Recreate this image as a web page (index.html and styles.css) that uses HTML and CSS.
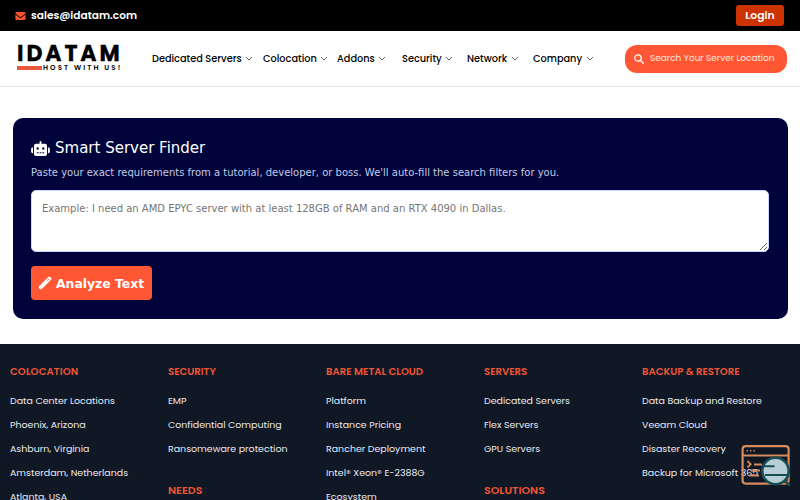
FILE: index.html
```html
<!DOCTYPE html>
<html lang="en">
<head>
  <meta charset="UTF-8">
  <meta name="viewport" content="width=device-width, initial-scale=1.0">
  <title>Smart Server Finder - IDATAM</title>
  <link rel="stylesheet" href="styles.css">
</head>
<body>

  <!-- Top bar -->
  <div class="topbar">
    <a class="mail" href="mailto:sales@idatam.com">
      <svg class="mail-icon" viewBox="0 0 512 400"><path d="M48 0h416a48 48 0 0 1 29 86L275 250a32 32 0 0 1-38 0L19 86A48 48 0 0 1 48 0zM0 120l218 163a64 64 0 0 0 76 0l218-163v216a64 64 0 0 1-64 64H64a64 64 0 0 1-64-64z"/></svg>
      <span>sales@idatam.com</span>
    </a>
    <a class="login" href="#">Login</a>
  </div>

  <!-- Navbar -->
  <header class="navbar">
    <a class="logo" href="#">
      <span class="logo-name">IDATAM</span>
      <span class="logo-tag"><i class="logo-bar"></i><span class="logo-text">HOST WITH US!</span></span>
    </a>
    <nav class="menu">
      <a class="w-dedicated" href="#">Dedicated Servers <svg class="chevron" viewBox="0 0 8 5"><path d="M1 1l3 3 3-3"/></svg></a>
      <a class="w-colocation" href="#">Colocation <svg class="chevron" viewBox="0 0 8 5"><path d="M1 1l3 3 3-3"/></svg></a>
      <a href="#">Addons <svg class="chevron" viewBox="0 0 8 5"><path d="M1 1l3 3 3-3"/></svg></a>
      <a href="#">Security <svg class="chevron" viewBox="0 0 8 5"><path d="M1 1l3 3 3-3"/></svg></a>
      <a class="w-network" href="#">Network <svg class="chevron" viewBox="0 0 8 5"><path d="M1 1l3 3 3-3"/></svg></a>
      <a href="#">Company <svg class="chevron" viewBox="0 0 8 5"><path d="M1 1l3 3 3-3"/></svg></a>
    </nav>
    <a class="search" href="#">
      <svg class="search-icon" viewBox="0 0 10 10"><circle cx="4" cy="4" r="3.2"/><path d="M6.5 6.5L9.3 9.3"/></svg>
      <span>Search Your Server Location</span>
    </a>
  </header>

  <!-- Finder -->
  <main class="finder">
    <h1 class="finder-title">
      <svg class="robot" viewBox="0 0 640 512"><path fill-rule="evenodd" d="M320 0a32 32 0 0 1 32 32v64h120a72 72 0 0 1 72 72v272a72 72 0 0 1-72 72H168a72 72 0 0 1-72-72V168a72 72 0 0 1 72-72h120V32a32 32 0 0 1 32-32zM192 384v32h64v-32zm96 0v32h64v-32zm96 0v32h64v-32zM224 216a40 40 0 1 0 0 80 40 40 0 1 0 0-80zm192 0a40 40 0 1 0 0 80 40 40 0 1 0 0-80zM48 224h16v192H48a48 48 0 0 1-48-48v-96a48 48 0 0 1 48-48zm544 0a48 48 0 0 1 48 48v96a48 48 0 0 1-48 48h-16V224z"/></svg>
      Smart Server Finder
    </h1>
    <p class="finder-text">Paste your exact requirements from a tutorial, developer, or boss. We'll auto-fill the search filters for you.</p>
    <textarea class="finder-input" placeholder="Example: I need an AMD EPYC server with at least 128GB of RAM and an RTX 4090 in Dallas."></textarea>
    <button class="finder-btn">
      <svg class="wand" viewBox="0 0 14 14"><path d="M1 10.3L10.3 1q1-.9 2 0l.8.8q.9 1 0 2L3.8 13q-1 .8-1.9 0l-.9-.9q-.8-.9 0-1.8z"/><path class="wand-tip" d="M9.4 4.7l2.2-2.2"/></svg>
      <span>Analyze Text</span>
    </button>
  </main>

  <!-- Footer -->
  <footer class="footer">
    <div class="col">
      <h4 class="wide">COLOCATION</h4>
      <ul>
        <li>Data Center Locations</li>
        <li>Phoenix, Arizona</li>
        <li>Ashburn, Virginia</li>
        <li>Amsterdam, Netherlands</li>
        <li>Atlanta, USA</li>
      </ul>
    </div>
    <div class="col">
      <h4>SECURITY</h4>
      <ul>
        <li>EMP</li>
        <li>Confidential Computing</li>
        <li>Ransomeware protection</li>
      </ul>
      <h4 class="second">NEEDS</h4>
    </div>
    <div class="col">
      <h4>BARE METAL CLOUD</h4>
      <ul>
        <li>Platform</li>
        <li>Instance Pricing</li>
        <li>Rancher Deployment</li>
        <li>Intel® Xeon® E-2388G</li>
        <li>Ecosystem</li>
      </ul>
    </div>
    <div class="col">
      <h4>SERVERS</h4>
      <ul>
        <li>Dedicated Servers</li>
        <li>Flex Servers</li>
        <li>GPU Servers</li>
      </ul>
      <h4 class="second">SOLUTIONS</h4>
    </div>
    <div class="col">
      <h4>BACKUP &amp; RESTORE</h4>
      <ul>
        <li>Data Backup and Restore</li>
        <li>Veeam Cloud</li>
        <li>Disaster Recovery</li>
        <li>Backup for Microsoft 365</li>
      </ul>
    </div>
  </footer>

  <!-- Floating finder button -->
  <a class="float-btn" href="#">
    <svg viewBox="0 0 50 44">
      <g fill="none" stroke="#d58b5c" stroke-width="2.2">
        <rect x="1.6" y="2.1" width="46" height="37.5" rx="3"/>
        <path d="M2 11.5h45"/>
        <path d="M6.5 17l3.2 3.2-3.2 3.2M13 20.5h8M10 26.5h9M8 31.5h10" stroke-width="1.8"/>
        <path d="M5.5 6.7h1.4M9 6.7h1.4M12.5 6.7h1.4" stroke-width="1.4"/>
      </g>
      <path d="M44 37l4.5 4.5" stroke="#174e55" stroke-width="2.5"/>
      <circle cx="34.5" cy="27" r="13.2" fill="#b9cfd7" stroke="#174e55" stroke-width="2.6"/>
      <path d="M22 22.3h11.5M24 31h22" stroke="#174e55" stroke-width="2.1"/>
    </svg>
  </a>

</body>
</html>
```
FILE: styles.css
```css
* {
  box-sizing: border-box;
}
body {
  margin: 0;
  height: 500px;
  overflow: hidden;
  background: #fff;
  font-family: Poppins, Inter, sans-serif;
  color: #000;
}
a {
  color: inherit;
  text-decoration: none;
}

/* Top bar */
.topbar {
  height: 31px;
  padding: 0 16px 0 15px;
  background: #000;
  color: #fff;
  display: flex;
  justify-content: space-between;
  align-items: center;
}
.mail {
  display: flex;
  align-items: center;
  gap: 5px;
  font-size: 10.6px;
  font-weight: 600;
}
.mail-icon {
  width: 11px;
  height: 8px;
  fill: #f1532f;
}
.login {
  width: 48px;
  height: 21px;
  border-radius: 3px;
  background: #cc3300;
  font-size: 10.8px;
  font-weight: 600;
  line-height: 21px;
  text-align: center;
}

/* Navbar */
.navbar {
  height: 56px;
  padding: 0 13px 0 17px;
  border-bottom: 1px solid #e3e3e3;
  display: flex;
  align-items: center;
}
.logo {
  width: 135px;
  padding-bottom: 4px;
}
.logo-name {
  display: block;
  padding-top: 1.5px;
  margin-bottom: -1.5px;
  font-size: 22px;
  font-weight: 700;
  line-height: 22px;
  letter-spacing: 2.9px;
  -webkit-text-stroke: 0.3px #000;
}
.logo-tag {
  display: flex;
  align-items: center;
  height: 9px;
}
.logo-bar {
  width: 25px;
  height: 4px;
  margin-right: 1px;
  background: #e9573c;
}
.logo-text {
  font-size: 7px;
  font-weight: 600;
  line-height: 9px;
  letter-spacing: 2.1px;
  white-space: nowrap;
}
.menu {
  display: flex;
  width: 473px;
  font-size: 9.75px;
  font-weight: 500;
}
.menu a {
  width: 65px;
  display: flex;
  align-items: center;
  gap: 3.5px;
  white-space: nowrap;
}
.menu .w-dedicated {
  width: 111px;
}
.menu .w-colocation {
  width: 74px;
}
.menu .w-network {
  width: 66px;
}
.chevron {
  width: 8px;
  height: 5px;
  fill: none;
  stroke: #555;
  stroke-width: 0.9;
}
.search {
  width: 162px;
  height: 28px;
  padding-left: 9px;
  border-radius: 12px;
  background: #ff5733;
  color: #ffe9e3;
  display: flex;
  align-items: center;
  gap: 6px;
  font-size: 8.95px;
  white-space: nowrap;
}
.search-icon {
  width: 10px;
  height: 10px;
  fill: none;
  stroke: #fff;
  stroke-width: 1.3;
  stroke-linecap: round;
}

/* Finder */
.finder {
  margin: 31px 12.5px 25px;
  height: 201px;
  padding: 18px 18.5px;
  border-radius: 10px;
  background: #00043a;
  color: #fff;
  font-family: "DejaVu Sans", sans-serif;
}
.finder-title {
  margin: 0;
  height: 24px;
  display: flex;
  align-items: center;
  gap: 5px;
  font-size: 15px;
  font-weight: 400;
}
.robot {
  width: 19px;
  height: 15px;
  fill: #fff;
}
.finder-text {
  margin: 5px 0 10px;
  font-size: 10px;
  line-height: 15px;
  color: #c3c9e6;
}
.finder-input {
  display: block;
  width: 100%;
  height: 62px;
  padding: 10px;
  border: 1px solid #cbd5ff;
  border-radius: 5px;
  background: #fff;
  font-family: inherit;
  font-size: 10px;
  line-height: 15px;
}
.finder-input::placeholder {
  color: #757575;
}
.finder-btn {
  width: 121px;
  height: 34px;
  margin-top: 14px;
  padding: 0 7px;
  border: none;
  border-radius: 4px;
  background: #ff5733;
  color: #fff;
  display: flex;
  align-items: center;
  gap: 4px;
  font-family: inherit;
  font-size: 12.4px;
  font-weight: 700;
  white-space: nowrap;
}
.wand {
  width: 14px;
  height: 14px;
  flex: none;
  fill: #fff;
}
.wand-tip {
  stroke: #ff5733;
  stroke-width: 0.9;
}

/* Footer */
.footer {
  height: 156px;
  padding: 19.5px 0 0 10px;
  background: #101725;
  color: #e8ebf0;
  display: grid;
  grid-template-columns: repeat(5, 158px);
  overflow: hidden;
}
.footer h4 {
  margin: 0 0 14px;
  font-size: 10.1px;
  font-weight: 600;
  line-height: 15px;
  color: #ee5535;
}
.footer .wide {
  letter-spacing: 0.1px;
}
.footer ul {
  margin: 0;
  padding: 0;
  list-style: none;
}
.footer li {
  height: 24.2px;
  font-size: 9.45px;
  line-height: 15px;
  white-space: nowrap;
}
.footer .second {
  margin-top: 18px;
  font-size: 11px;
}

.float-btn {
  position: fixed;
  right: 9px;
  bottom: 12px;
  width: 50px;
  height: 44px;
}
```
